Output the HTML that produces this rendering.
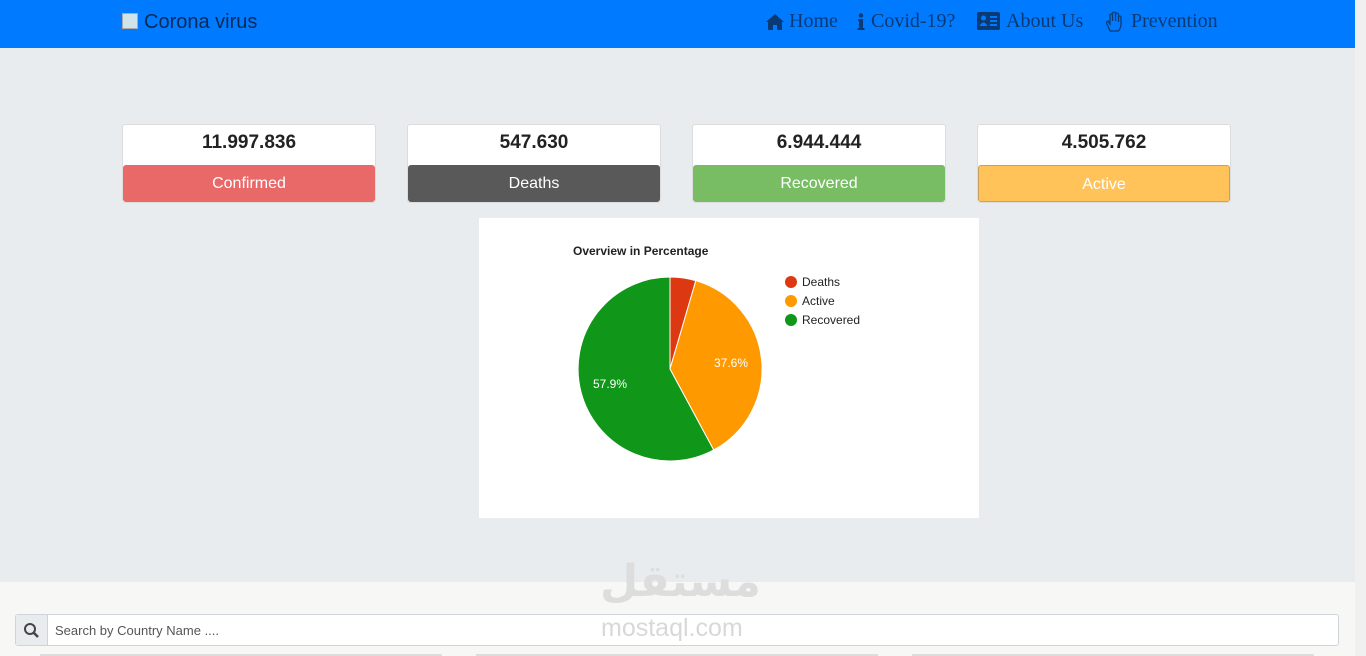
<!DOCTYPE html>
<html><head><style>
body{margin:0;width:1366px;height:656px;overflow:hidden;background:#e9ecef;font-family:"Liberation Sans",sans-serif;position:relative}
.nav{position:absolute;left:0;top:0;width:1355px;height:48px;background:#007bff}
.brand{position:absolute;left:122px;top:11px;font-size:20px;color:#0a2a55}
.l{position:absolute;top:10px;font-family:"Liberation Serif",serif;font-size:20px;color:#0a3a75;white-space:nowrap}
.card{position:absolute;top:124px;width:252px;height:77px;background:#fff;border:1px solid #dcdcdc;border-radius:3px;overflow:hidden}
.num{height:40px;line-height:36px;text-align:center;font-size:19px;font-weight:bold;color:#222}
.btn{height:37px;line-height:37px;text-align:center;color:#fff;font-size:16px;border-radius:3px}
.chart{position:absolute;left:479px;top:218px;width:500px;height:300px;background:#fff}
.bottom{position:absolute;left:0;top:582px;width:1355px;height:74px;background:#f7f8f6}
.search{position:absolute;left:15px;top:614px;width:1322px;height:30px;border:1px solid #ced4da;border-radius:3px;background:#fff}
.sicon{position:absolute;left:0;top:0;width:31px;height:30px;background:#e9ecef;border-right:1px solid #ced4da}
.scroll{position:absolute;left:1355px;top:0;width:11px;height:656px;background:#f0f0f0}
</style></head><body>
<div class="nav">
<div class="brand"><span style="display:inline-block;width:14px;height:14px;background:#cfe3ea;border:1px solid #aaa;vertical-align:-1px;margin-right:6px"></span>Corona virus</div>
<svg style="position:absolute;left:765px;top:13px" width="20" height="17"><path d="M10,1 L1,9 L3,9 L3,17 L8,17 L8,12 L12,12 L12,17 L17,17 L17,9 L19,9Z" fill="#0a3a75"/></svg>
<div class="l" style="left:789px">Home</div>
<svg style="position:absolute;left:857px;top:13px" width="8" height="17"><circle cx="4" cy="2.5" r="2.2" fill="#0a3a75"/><path d="M1,6 L6,6 L6,15 L7.5,15 L7.5,17 L0.5,17 L0.5,15 L2,15 L2,8 L1,8Z" fill="#0a3a75"/></svg>
<div class="l" style="left:871px">Covid-19?</div>
<svg style="position:absolute;left:977px;top:12px" width="23" height="18"><rect x="0" y="0" width="23" height="18" rx="2" fill="#0a3a75"/><circle cx="6.5" cy="6" r="2.5" fill="#007bff"/><path d="M2.5,14 Q6.5,7 10.5,14Z" fill="#007bff"/><rect x="13" y="4" width="7" height="2" fill="#007bff"/><rect x="13" y="8" width="7" height="2" fill="#007bff"/><rect x="13" y="12" width="7" height="2" fill="#007bff"/></svg>
<div class="l" style="left:1006px">About Us</div>
<svg style="position:absolute;left:1104px;top:11px" width="20" height="22"><path d="M6,20 L3,13 Q2,10 4,10 L6,13 L6,4 Q7,2 8.5,4 L8.5,10 L8.5,2 Q10,0 11.5,2 L11.5,10 L11.5,3 Q13,1 14.5,3 L14.5,11 L14.5,6 Q16,4 17,6 L17,14 Q16,19 14,20Z" fill="none" stroke="#0a3a75" stroke-width="1.3"/></svg>
<div class="l" style="left:1131px">Prevention</div>
</div>
<div class="card" style="left:122px"><div class="num">11.997.836</div><div class="btn" style="background:#e96868">Confirmed</div></div>
<div class="card" style="left:407px"><div class="num">547.630</div><div class="btn" style="background:#595959">Deaths</div></div>
<div class="card" style="left:692px"><div class="num">6.944.444</div><div class="btn" style="background:#78bd63">Recovered</div></div>
<div class="card" style="left:977px"><div class="num">4.505.762</div><div class="btn" style="background:#ffc35a;border:1px solid #c9a060;box-sizing:border-box">Active</div></div>
<div class="chart">
<svg width="500" height="300" font-family="Liberation Sans,sans-serif">
<text x="94" y="37" font-size="12" font-weight="bold" fill="#222">Overview in Percentage</text>
<g transform="translate(-479,-218)">
<path d="M670,369 L670,277 A92,92 0 0 1 695.8,280.7Z" fill="#dc3912" stroke="#fff"/>
<path d="M670,369 L695.8,280.7 A92,92 0 0 1 713.7,450Z" fill="#ff9900" stroke="#fff"/>
<path d="M670,369 L713.7,450 A92,92 0 1 1 670,277Z" fill="#109618" stroke="#fff"/>
<text x="714" y="367" font-size="12" fill="#fff">37.6%</text>
<text x="593" y="388" font-size="12" fill="#fff">57.9%</text>
<circle cx="791" cy="282" r="6" fill="#dc3912"/><text x="802" y="286" font-size="12" fill="#222">Deaths</text>
<circle cx="791" cy="301" r="6" fill="#ff9900"/><text x="802" y="305" font-size="12" fill="#222">Active</text>
<circle cx="791" cy="320" r="6" fill="#109618"/><text x="802" y="324" font-size="12" fill="#222">Recovered</text>
</g></svg></div>
<div class="bottom"></div>
<div style="position:absolute;left:600px;top:556px;font-size:44px;font-weight:bold;color:#ddd;font-family:'DejaVu Sans',sans-serif">مستقل</div>
<div class="search"><div class="sicon"><svg width="31" height="30"><circle cx="14" cy="14" r="5" fill="none" stroke="#444" stroke-width="2"/><line x1="18" y1="18" x2="22" y2="22" stroke="#444" stroke-width="2.5"/></svg></div>
<span style="position:absolute;left:39px;top:8px;font-size:13px;color:#555">Search by Country Name ....</span></div>
<div style="position:absolute;left:601px;top:614px;font-size:25px;color:#d8d8d8">mostaql.com</div>
<div style="position:absolute;left:40px;top:654px;width:402px;height:2px;background:#ddd"></div>
<div style="position:absolute;left:476px;top:654px;width:402px;height:2px;background:#ddd"></div>
<div style="position:absolute;left:912px;top:654px;width:402px;height:2px;background:#ddd"></div>
<div class="scroll"></div>
</body></html>
